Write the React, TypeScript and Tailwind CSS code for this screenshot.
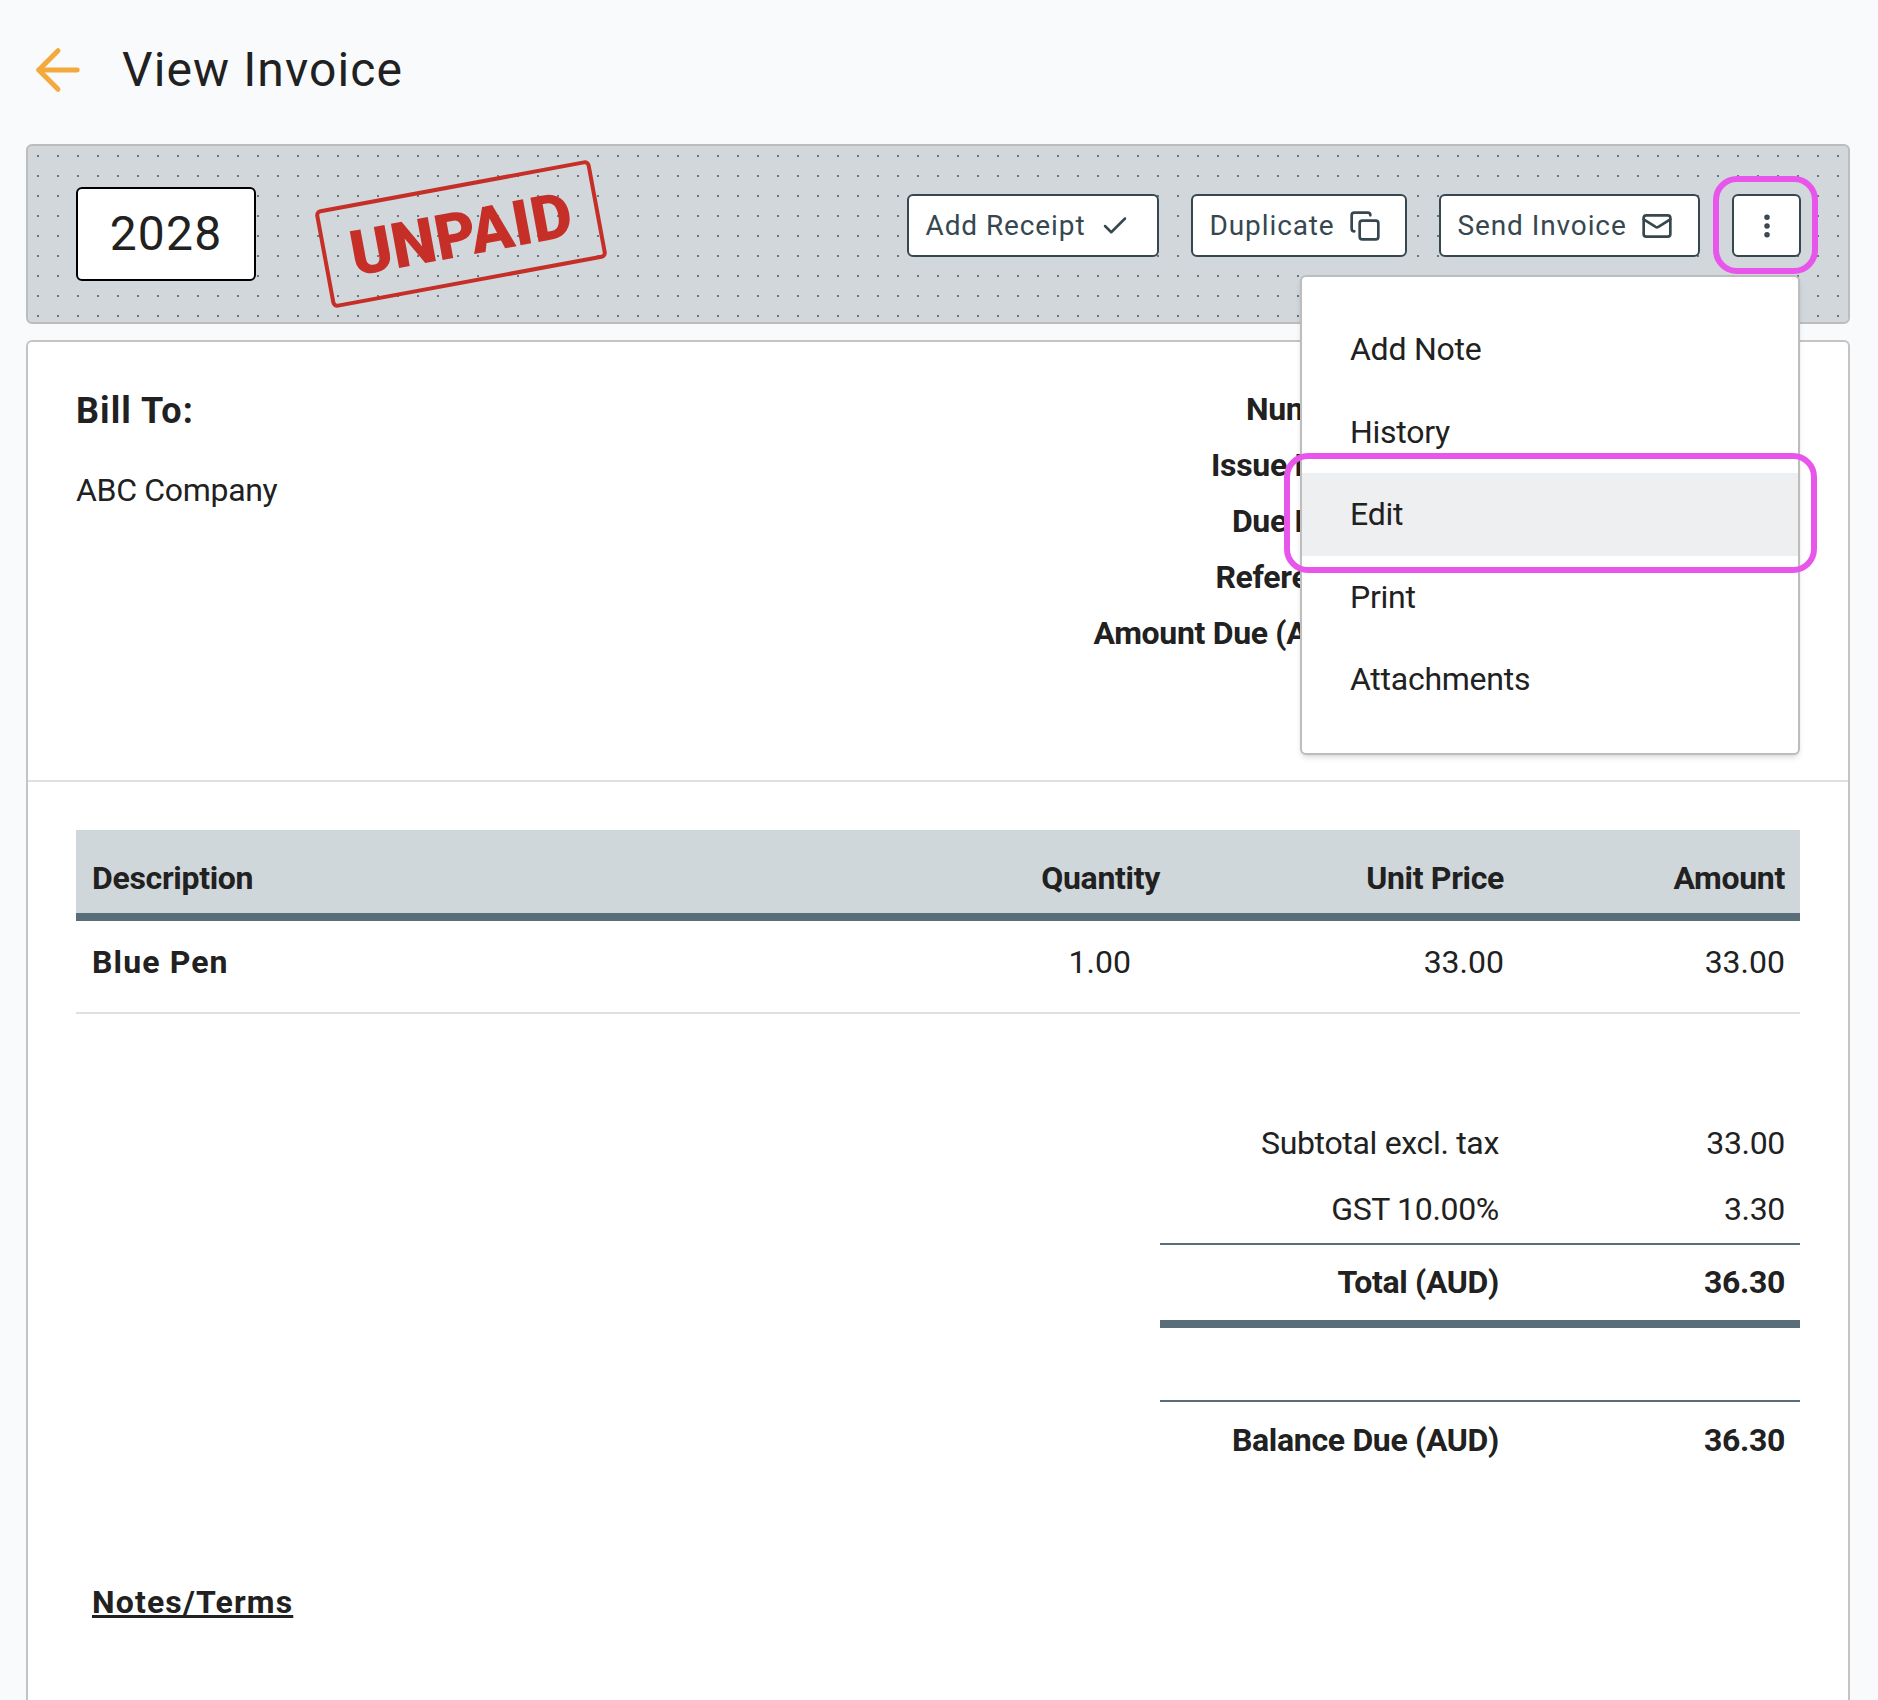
import { ArrowLeft, Check, Copy, Mail, MoreVertical } from "lucide-react";

const menuItems = ["Add Note", "History", "Edit", "Print", "Attachments"];
const metaLabels = ["Number:", "Issue Date:", "Due Date:", "Reference:", "Amount Due (AUD):"];

function ActionButton({ label, icon, className }: { label: string; icon: React.ReactNode; className: string }) {
  return (
    <button className={`flex h-[63px] items-center rounded-md border-2 border-[#37474f] bg-white pl-[16.5px] text-[28px] tracking-[0.032em] text-[#37474f] ${className}`}>
      {label}
      {icon}
    </button>
  );
}

function TotalRow({ label, value, bold, className }: { label: string; value: string; bold?: boolean; className: string }) {
  return (
    <div className={`flex items-center justify-end text-[32px] tracking-[-0.01em] ${bold ? "font-bold" : ""} ${className}`}>
      <span>{label}</span>
      <span className="w-[301px] pr-[15px] text-right">{value}</span>
    </div>
  );
}

export default function App() {
  return (
    <div className="relative h-[1700px] overflow-hidden bg-[#f9fafc] font-['Roboto',sans-serif] text-[#212121]">
      {/* page title */}
      <div className="flex h-[144px] items-start pl-[36px] pt-[38px]">
        <ArrowLeft className="h-[66px] w-[66px] -translate-x-[11px] -translate-y-[1px] text-[#f4a93c]" strokeWidth={1.8} />
        <h1 className="ml-[20px] text-[48px] leading-[64px] tracking-[0.023em]">View Invoice</h1>
      </div>

      {/* toolbar */}
      <div className="relative ml-[26px] mr-[28px] flex h-[180px] items-center rounded-md border-2 border-[#bdbdbd] bg-[#d1d7db] bg-[radial-gradient(circle,#6b757b_1px,transparent_1.2px)] bg-[length:20px_20px] bg-[position:0px_0px] pl-[48px]">
        <div className="flex h-[94px] w-[180px] items-center justify-center rounded-md border-2 border-black bg-white text-[48px] tracking-[0.025em]">2028</div>
        <div className="ml-[65px] flex h-[100px] w-[280px] shrink-0 -rotate-[10.5deg] items-center justify-center rounded-md border-[4.5px] border-[#c62f28] text-[63px] font-black leading-none text-[#c62f28]">
          UNPAID
        </div>
        <div className="mb-[17px] ml-auto mr-[47px] flex items-center">
          <ActionButton label="Add Receipt" className="w-[252px]" icon={<Check className="ml-[15px] h-[30px] w-[30px]" strokeWidth={2} />} />
          <ActionButton label="Duplicate" className="ml-[32px] w-[216px]" icon={<Copy className="ml-[14px] h-[32px] w-[32px]" strokeWidth={2} />} />
          <ActionButton label="Send Invoice" className="ml-[32px] w-[261px]" icon={<Mail className="ml-[14px] h-[32px] w-[32px]" strokeWidth={2} />} />
          <button className="ml-[32px] flex h-[63px] w-[69px] items-center justify-center rounded-md border-2 border-[#37474f] bg-white text-[#37474f]">
            <MoreVertical className="h-[30px] w-[30px]" strokeWidth={2.4} />
          </button>
        </div>
      </div>

      {/* invoice card */}
      <div className="ml-[26px] mr-[28px] mt-[16px] h-[1400px] rounded-t-md border-2 border-b-0 border-[#c4c4c4] bg-white">
        <div className="flex h-[440px] border-b-2 border-[#e0e0e0] px-[48px] pt-[45px]">
          <div className="flex-1">
            <div className="text-[36px] font-bold leading-[48px] tracking-[0.03em]">Bill To:</div>
            <div className="mt-[35px] text-[32px] leading-[40px] tracking-[-0.01em]">ABC Company</div>
          </div>
          <div className="-mt-[2px] mr-[432px] flex flex-col items-end">
            {metaLabels.map((label) => (
              <div key={label} className="h-[56px] text-[32px] font-bold leading-[48px] tracking-[-0.01em]">{label}</div>
            ))}
          </div>
        </div>

        <div className="px-[48px] pt-[48px]">
          <div className="flex h-[91px] items-center border-b-[8px] border-[#5a6e7a] bg-[#d0d7da] pl-[16px] pr-[15px] pt-[12px] text-[32px] font-bold tracking-[-0.01em]">
            <span className="flex-1">Description</span>
            <span>Quantity</span>
            <span className="w-[344px] text-right">Unit Price</span>
            <span className="w-[281px] text-right">Amount</span>
          </div>
          <div className="flex h-[93px] items-center border-b-2 border-[#e0e0e0] pb-[9px] pl-[16px] pr-[15px] text-[32px]">
            <span className="flex-1 font-bold tracking-[0.035em]">Blue Pen</span>
            <span>1.00</span>
            <span className="w-[373px] text-right">33.00</span>
            <span className="w-[281px] text-right">33.00</span>
          </div>

          <div className="ml-auto mt-[95px] w-[640px]">
            <TotalRow label="Subtotal excl. tax" value="33.00" className="h-[67px]" />
            <TotalRow label="GST 10.00%" value="3.30" className="h-[69px] border-b-2 border-[#5a6e7a] pb-[1px]" />
            <TotalRow label="Total (AUD)" value="36.30" bold className="h-[83px] border-b-[8px] border-[#5a6e7a] pb-[2px]" />
            <TotalRow label="Balance Due (AUD)" value="36.30" bold className="mt-[72px] h-[80px] border-t-2 border-[#5a6e7a] pb-[3px]" />
          </div>

          <div className="mt-[98px] pl-[16px] text-[32px] font-bold tracking-[0.036em] underline">Notes/Terms</div>
        </div>
      </div>

      {/* open menu */}
      <div className="absolute left-[1300px] top-[275px] w-[500px] rounded-md border-2 border-[#bdbdbd] bg-white pb-[32px] pt-[31px] shadow-md">
        {menuItems.map((item) => (
          <div key={item} className={`flex h-[82.5px] items-center pl-[48px] text-[32px] tracking-[-0.008em] ${item === "Edit" ? "bg-[#eeeff0]" : ""}`}>
            {item}
          </div>
        ))}
      </div>

      {/* highlight annotations */}
      <div className="absolute left-[1713px] top-[176px] h-[98px] w-[105px] rounded-[24px] border-[6px] border-[#e855ea]" />
      <div className="absolute left-[1284px] top-[453px] h-[120px] w-[533px] rounded-[24px] border-[6px] border-[#e855ea]" />
    </div>
  );
}
